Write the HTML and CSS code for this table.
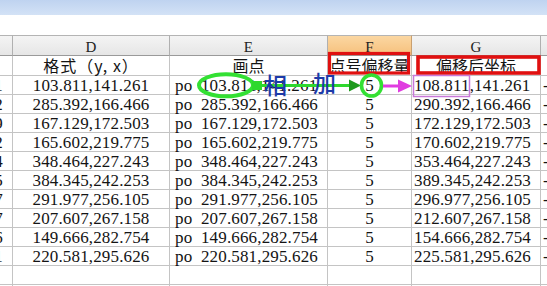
FILE: index.html
```html
<!DOCTYPE html>
<html>
<head>
<meta charset="utf-8">
<link rel="stylesheet" href="styles.css">
</head>
<body>
<div class="page">
  <div class="titlebar"></div>
  <div class="spacer"></div>
  <div class="sheet">
    <div class="ch"></div>
    <div class="ch">D</div>
    <div class="ch">E</div>
    <div class="ch sel">F</div>
    <div class="ch">G</div>
    <div class="ch"></div>

    <div class="c a"></div>
    <div class="c d t wide">格式（y, x）</div>
    <div class="c d t">画点</div>
    <div class="c d t">点号偏移量</div>
    <div class="c d t">偏移后坐标</div>
    <div class="c h"></div>

    <div class="c a">1</div><div class="c d">103.811,141.261</div><div class="c e">po&ensp;103.811,141.261</div><div class="c d">5</div><div class="c g">108.811,141.261</div><div class="c h">-</div>
    <div class="c a">2</div><div class="c d">285.392,166.466</div><div class="c e">po&ensp;285.392,166.466</div><div class="c d">5</div><div class="c g">290.392,166.466</div><div class="c h">-</div>
    <div class="c a">9</div><div class="c d">167.129,172.503</div><div class="c e">po&ensp;167.129,172.503</div><div class="c d">5</div><div class="c g">172.129,172.503</div><div class="c h">-</div>
    <div class="c a">2</div><div class="c d">165.602,219.775</div><div class="c e">po&ensp;165.602,219.775</div><div class="c d">5</div><div class="c g">170.602,219.775</div><div class="c h">-</div>
    <div class="c a">4</div><div class="c d">348.464,227.243</div><div class="c e">po&ensp;348.464,227.243</div><div class="c d">5</div><div class="c g">353.464,227.243</div><div class="c h">-</div>
    <div class="c a">5</div><div class="c d">384.345,242.253</div><div class="c e">po&ensp;384.345,242.253</div><div class="c d">5</div><div class="c g">389.345,242.253</div><div class="c h">-</div>
    <div class="c a">7</div><div class="c d">291.977,256.105</div><div class="c e">po&ensp;291.977,256.105</div><div class="c d">5</div><div class="c g">296.977,256.105</div><div class="c h">-</div>
    <div class="c a">7</div><div class="c d">207.607,267.158</div><div class="c e">po&ensp;207.607,267.158</div><div class="c d">5</div><div class="c g">212.607,267.158</div><div class="c h">-</div>
    <div class="c a">6</div><div class="c d">149.666,282.754</div><div class="c e">po&ensp;149.666,282.754</div><div class="c d">5</div><div class="c g">154.666,282.754</div><div class="c h">-</div>
    <div class="c a">1</div><div class="c d">220.581,295.626</div><div class="c e">po&ensp;220.581,295.626</div><div class="c d">5</div><div class="c g">225.581,295.626</div><div class="c h">-</div>

    <div class="c a"></div><div class="c"></div><div class="c"></div><div class="c"></div><div class="c"></div><div class="c"></div>
    <div class="c a"></div><div class="c"></div><div class="c"></div><div class="c"></div><div class="c"></div><div class="c"></div>
  </div>

  <svg class="annot" width="547" height="286" viewBox="0 0 547 286">
    <rect x="329.5" y="53.5" width="79" height="19.5" fill="none" stroke="#e01010" stroke-width="3.2"/>
    <rect x="418" y="57" width="121" height="16" fill="none" stroke="#e01010" stroke-width="3.6"/>
    <ellipse cx="226" cy="85.3" rx="27" ry="11" fill="none" stroke="#33e033" stroke-width="4"/>
    <line x1="254" y1="85.5" x2="352" y2="85.5" stroke="#2ed82e" stroke-width="3"/>
    <rect x="252" y="81" width="10" height="9" fill="#2ed82e"/>
    <polygon points="349,79.5 361,85.5 349,91.5" fill="#1e9a1e"/>
    <ellipse cx="371.5" cy="85.5" rx="10" ry="10.5" fill="none" stroke="#33e033" stroke-width="3.6"/>
    <line x1="383" y1="86" x2="400" y2="86" stroke="#e03ce0" stroke-width="3"/>
    <polygon points="398,79.5 412,86 398,92.5" fill="#e03ce0"/>
    <rect x="413.5" y="75.5" width="56" height="21" fill="none" stroke="#c878d8" stroke-width="1.5"/>
    <text x="264" y="94" class="blue">相</text>
    <text x="313" y="92" class="blue">加</text>
  </svg>
</div>
</body>
</html>
```

FILE: styles.css
```css
html, body {
  margin: 0;
  padding: 0;
  background: #ffffff;
}

.page {
  position: relative;
  width: 547px;
  height: 286px;
  overflow: hidden;
}

.titlebar {
  height: 15px;
  background: linear-gradient(to bottom, #bfd3f0, #d3e2f6);
}

.spacer {
  height: 20px;
  background: #ffffff;
}

.sheet {
  display: grid;
  grid-template-columns: 13px 157px 158px 84px 129px 1fr;
  grid-template-rows: 21px 20px;
  grid-auto-rows: 19px;
  font-family: "Liberation Serif", "Noto Sans CJK SC", serif;
  font-size: 17px;
  line-height: 17px;
  letter-spacing: 0.15px;
  color: #141414;
}

.ch {
  box-sizing: border-box;
  border-top: 1px solid #b4b4b4;
  border-bottom: 1px solid #9a9a9a;
  border-right: 1px solid #b0b0b0;
  background: linear-gradient(to bottom, #f4f4f4, #e6e6e6);
  font-size: 15px;
  line-height: 16px;
  color: #222;
  display: flex;
  justify-content: center;
  align-items: center;
  padding-top: 3px;
}

.ch.sel {
  background: linear-gradient(to bottom, #fbd7a2, #f6c07c);
  border-right-color: #c9a070;
}

.c {
  box-sizing: border-box;
  border-right: 1px solid #c4c4c4;
  border-bottom: 1px solid #c4c4c4;
  display: flex;
  align-items: center;
  white-space: nowrap;
  padding-top: 1px;
}

.a {
  justify-content: flex-end;
  padding-right: 9px;
  overflow: hidden;
}

.d {
  justify-content: center;
}

.t {
  font-family: "Noto Sans CJK SC", "Liberation Serif", sans-serif;
  font-size: 16px;
  line-height: 19px;
  letter-spacing: 0;
  padding-top: 0;
}

.t.wide {
  letter-spacing: 1px;
}

.e {
  padding-left: 5px;
}

.g {
  padding-left: 2px;
}

.h {
  padding-left: 2px;
  border-right: none;
}

.annot {
  position: absolute;
  left: 0;
  top: 0;
}

.blue {
  font-family: "Noto Sans CJK SC", sans-serif;
  font-size: 23px;
  font-weight: 500;
  fill: #1c3aa8;
}
```
